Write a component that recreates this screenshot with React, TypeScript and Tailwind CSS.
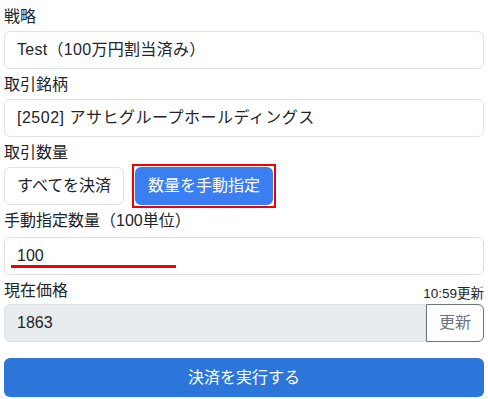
function App() {
  return (
    <div
      className="w-[488px] h-[399px] bg-white px-[4px] pt-[5px] text-[16px] text-[#212529] overflow-hidden"
      style={{ fontFamily: '"Liberation Sans", "Noto Sans CJK JP", sans-serif' }}
    >
      <div className="leading-[24px]">戦略</div>
      <div className="mt-[2px] h-[38px] border border-[#dee2e6] rounded-[6px] px-[12px] flex items-center tracking-[0.3px]">
        Test（100万円割当済み）
      </div>

      <div className="mt-[4px] leading-[24px]">取引銘柄</div>
      <div className="mt-[2px] h-[38px] border border-[#dee2e6] rounded-[6px] px-[12px] flex items-center tracking-[0.5px]">
        [2502] アサヒグループホールディングス
      </div>

      <div className="mt-[4px] leading-[24px]">取引数量</div>
      <div className="mt-[2px] flex gap-[11px]">
        <div className="h-[38px] w-[120px] border border-[#dee2e6] rounded-[6px] flex items-center justify-center">
          すべてを決済
        </div>
        <div className="relative">
          <div className="h-[38px] w-[138px] bg-[#3b7ef2] text-white rounded-[6px] flex items-center justify-center">
            数量を手動指定
          </div>
          <span className="absolute -inset-[3px] border-2 border-[#f00000]" />
        </div>
      </div>

      <div className="mt-[4px] leading-[24px]">手動指定数量（100単位）</div>
      <div className="relative mt-[4px] h-[38px] border border-[#dee2e6] rounded-[6px] px-[12px] flex items-center">
        100
        <span className="absolute left-[6px] top-[27px] w-[165px] h-[3px] bg-[#f00000]" />
      </div>

      <div className="mt-[4px] h-[24px] flex justify-between items-end">
        <span className="leading-[24px]">現在価格</span>
        <span className="text-[13.5px] leading-[18px]">10:59更新</span>
      </div>
      <div className="mt-[1px] flex h-[38px]">
        <div className="flex-1 bg-[#e9ecef] border border-[#dee2e6] rounded-l-[6px] px-[12px] flex items-center">
          1863
        </div>
        <div className="w-[58px] border border-[#6c757d] rounded-r-[6px] text-[#6c757d] flex items-center justify-center">
          更新
        </div>
      </div>

      <div className="mt-[16px] h-[39px] bg-[#2c76da] text-white rounded-[6px] flex items-center justify-center">
        決済を実行する
      </div>
    </div>
  );
}

export default App;
